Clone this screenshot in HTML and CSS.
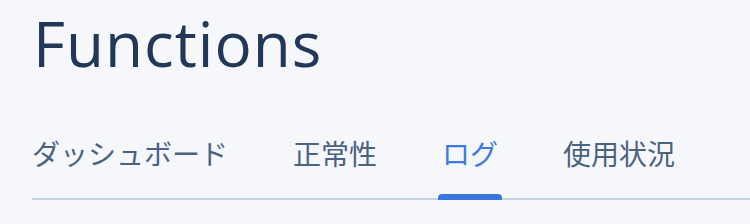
FILE: index.html
```html
<!DOCTYPE html>
<html>
<head>
    <title>Functions</title>
    <link rel="stylesheet" href="styles.css">
</head>
<body>
    <div class="page">
        <h1 class="page-title">Functions</h1>
        <nav class="tabs">
            <a class="tab">ダッシュボード</a>
            <a class="tab">正常性</a>
            <a class="tab active">ログ</a>
            <a class="tab">使用状況</a>
        </nav>
    </div>
</body>
</html>
```

FILE: styles.css
```css
body {
    margin: 0;
    background: #f5f7fa;
    font-family: "Open Sans", "Noto Sans CJK JP", sans-serif;
}
.page {
    padding: 5px 0 0 32px;
}
.page-title {
    margin: 0 0 0 1px;
    font-size: 62px;
    line-height: 76px;
    font-weight: 500;
    letter-spacing: 1px;
    color: #213858;
}
.tabs {
    display: flex;
    gap: 65px;
    margin-top: 58px;
    border-bottom: 2px solid #c7d2de;
}
.tab {
    position: relative;
    padding-bottom: 31px;
    font-family: "Noto Sans CJK JP", sans-serif;
    font-size: 28px;
    line-height: 28px;
    color: #4b6382;
    cursor: pointer;
}
.tab.active {
    color: #3b7be0;
}
.tab.active::after {
    content: "";
    position: absolute;
    left: -4px;
    right: -4px;
    bottom: -2px;
    height: 6px;
    background: #3777df;
    border-radius: 4px 4px 0 0;
}
```
